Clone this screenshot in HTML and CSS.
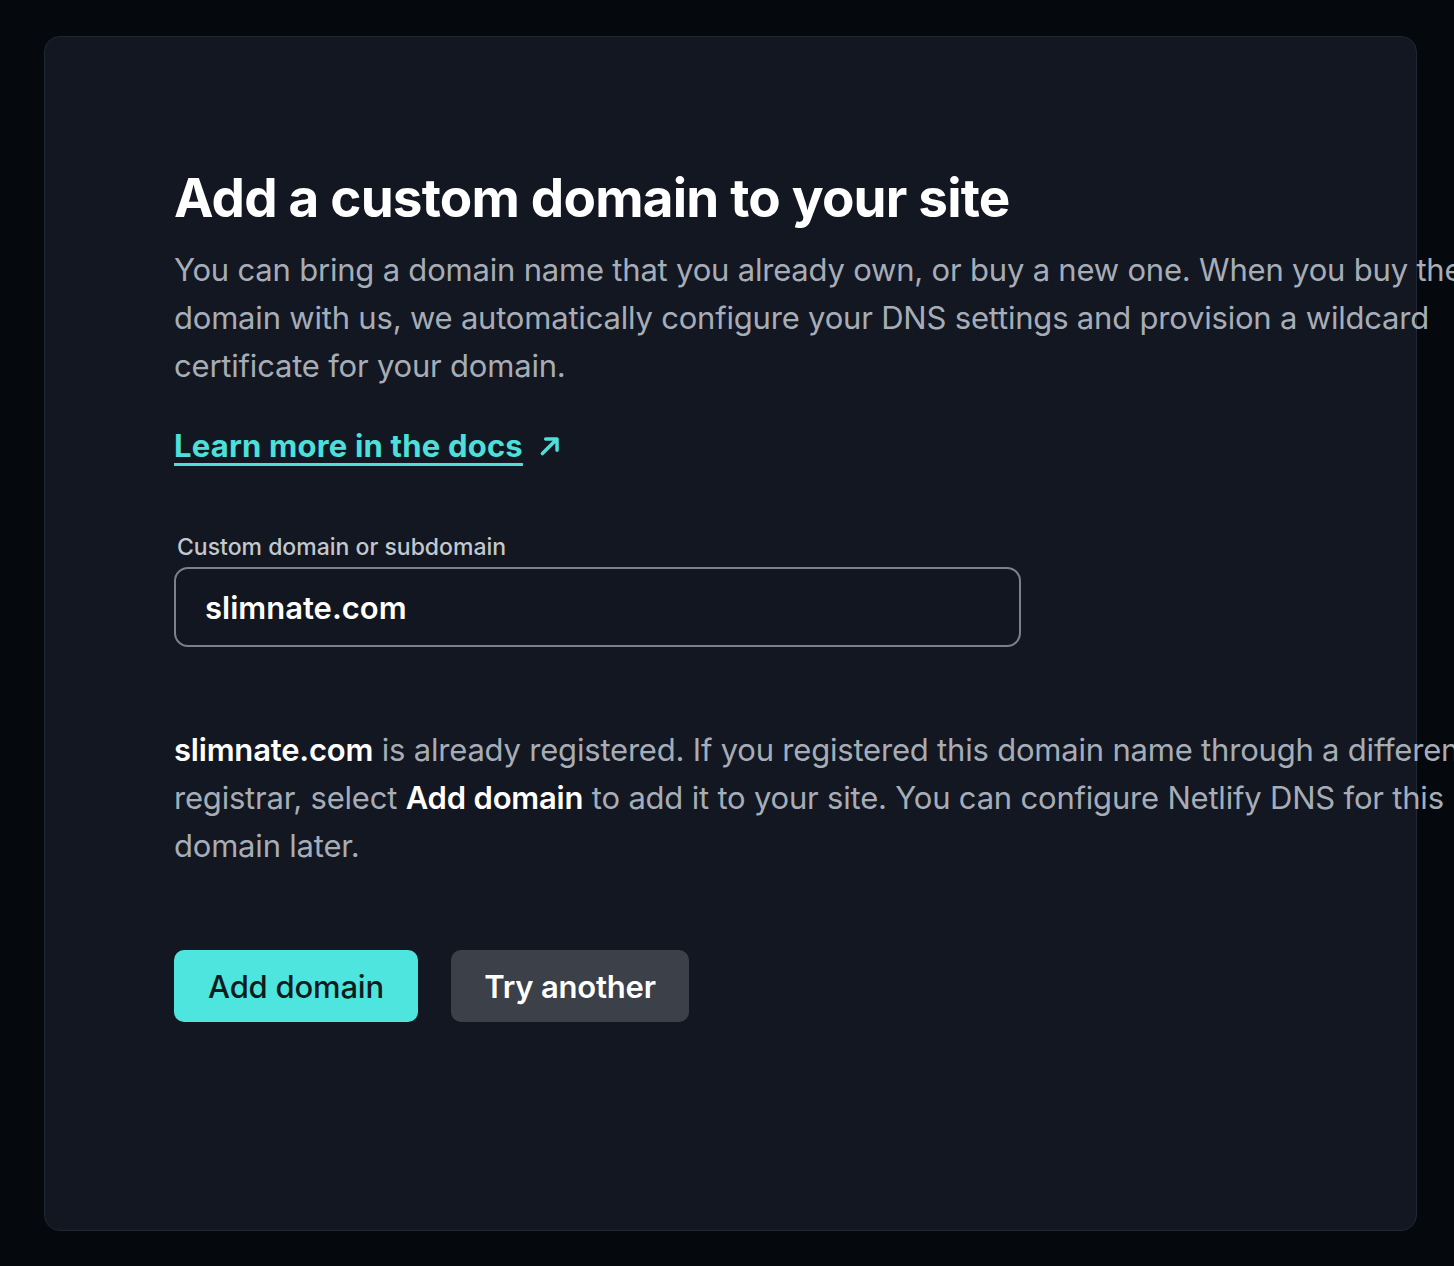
FILE: index.html
```html
<!DOCTYPE html>
<html lang="en">
<head>
<meta charset="utf-8">
<title>Add a custom domain</title>
<link rel="stylesheet" href="styles.css">
</head>
<body>
<main class="page">
  <section class="card">
    <h1 class="title">Add a custom domain to your site</h1>
    <p class="lead">You can bring a domain name that you already own, or buy a new one. When you buy the domain with us, we automatically configure your DNS settings and provision a wildcard certificate for your domain.</p>
    <a class="doclink" href="#"><span class="doclink-text">Learn more in the docs</span><svg class="doclink-icon" viewBox="0 0 24 24" width="26" height="26" aria-hidden="true"><path d="M5 19 L18 6 M8 5.5 H18.5 V16" fill="none" stroke="currentColor" stroke-width="3.2" stroke-linecap="round" stroke-linejoin="round"/></svg></a>
    <div class="field">
      <label class="field-label" for="domain">Custom domain or subdomain</label>
      <input class="field-input" id="domain" type="text" value="slimnate.com">
    </div>
    <p class="status"><strong>slimnate.com</strong> is already registered. If you registered this domain name through a different registrar, select <strong>Add domain</strong> to add it to your site. You can configure Netlify DNS for this domain later.</p>
    <div class="actions">
      <button class="btn btn-primary" type="button">Add domain</button>
      <button class="btn btn-secondary" type="button">Try another</button>
    </div>
  </section>
</main>
</body>
</html>
```

FILE: styles.css
```css
html, body {
  margin: 0;
  padding: 0;
  background: #05080d;
  overflow: hidden;
}
body {
  font-family: Inter, "Noto Sans", "Liberation Sans", sans-serif;
  color: #a6acb6;
  width: 1454px;
  height: 1266px;
}
.page {
  padding: 36px 37px 35px 44px;
  box-sizing: border-box;
  height: 1266px;
}
.card {
  box-sizing: border-box;
  height: 1195px;
  background: #121721;
  border: 1px solid #222831;
  border-radius: 16px;
  padding: 128px 0 0 129px;
}
.title {
  margin: 0;
  font-size: 53px;
  line-height: 66px;
  font-weight: 700;
  color: #ffffff;
  letter-spacing: -0.8px;
}
.lead {
  margin: 15px 0 0;
  width: 1290px;
  font-size: 31px;
  line-height: 48px;
  color: #a7adb7;
  letter-spacing: -0.2px;
}
.doclink {
  display: inline-flex;
  align-items: center;
  gap: 14px;
  margin-top: 36px;
  color: #4de0db;
  font-size: 31px;
  line-height: 40px;
  font-weight: 700;
  text-decoration: none;
  letter-spacing: 0.2px;
}
.doclink-text {
  text-decoration: underline;
  text-decoration-thickness: 3px;
  text-underline-offset: 6px;
}
.doclink-icon {
  display: block;
}
.field {
  margin-top: 66px;
  width: 847px;
}
.field-label {
  display: block;
  font-size: 23px;
  line-height: 30px;
  font-weight: 500;
  color: #c3c7ce;
  padding-left: 3px;
  margin-bottom: 5px;
}
.field-input {
  display: block;
  box-sizing: border-box;
  width: 847px;
  height: 80px;
  border: 2px solid #7b8089;
  border-radius: 14px;
  background: #111620;
  padding: 0 29px;
  font-family: inherit;
  font-size: 31px;
  font-weight: 600;
  color: #ffffff;
  outline: none;
}
.status {
  margin: 79px 0 0;
  width: 1300px;
  font-size: 31px;
  line-height: 48px;
  color: #a7adb7;
  letter-spacing: -0.2px;
}
.status strong {
  color: #ffffff;
  font-weight: 600;
}
.actions {
  display: flex;
  gap: 33px;
  margin-top: 80px;
}
.btn {
  height: 72px;
  border: none;
  border-radius: 10px;
  padding: 0 32px;
  font-family: inherit;
  font-size: 31px;
  font-weight: 500;
  letter-spacing: -0.2px;
  cursor: pointer;
}
.btn-primary {
  background: #4fe5df;
  color: #0e1c20;
  width: 244px;
}
.btn-secondary {
  background: #3b4049;
  color: #ffffff;
  font-weight: 600;
  width: 238px;
}
```
